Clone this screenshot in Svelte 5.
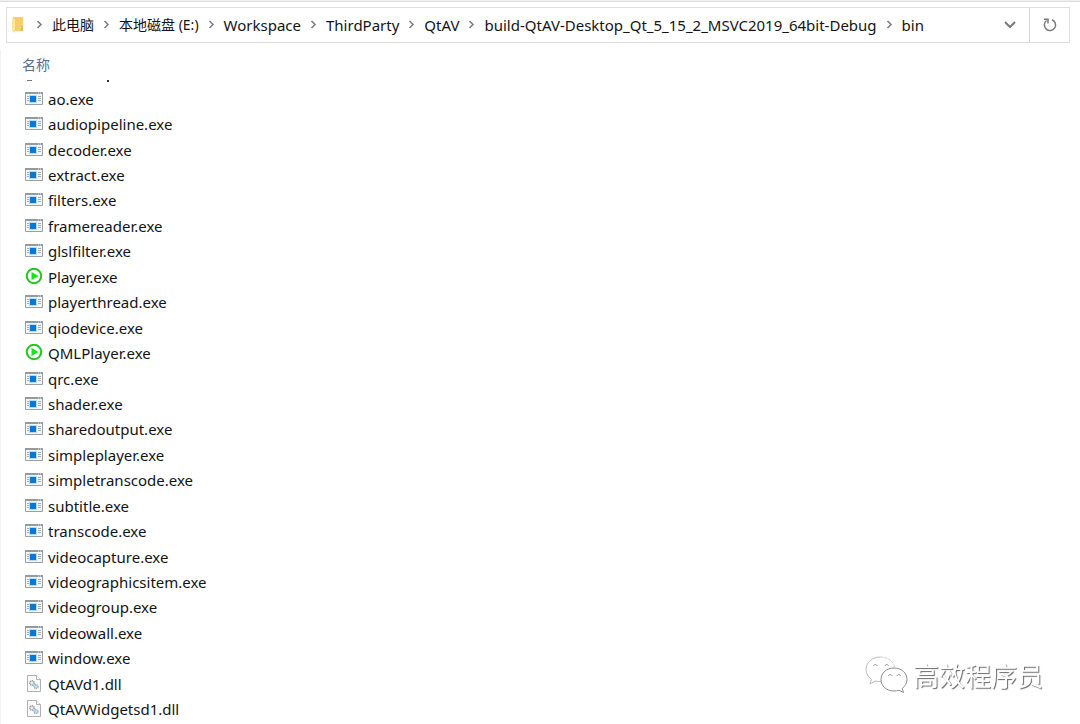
<script lang="ts">
	type Entry = { name: string; kind: 'exe' | 'player' | 'dll' };

	const crumbs = [
		'此电脑',
		'本地磁盘 (E:)',
		'Workspace',
		'ThirdParty',
		'QtAV',
		'build-QtAV-Desktop_Qt_5_15_2_MSVC2019_64bit-Debug',
		'bin'
	];

	const names = [
		'ao.exe',
		'audiopipeline.exe',
		'decoder.exe',
		'extract.exe',
		'filters.exe',
		'framereader.exe',
		'glslfilter.exe',
		'Player.exe',
		'playerthread.exe',
		'qiodevice.exe',
		'QMLPlayer.exe',
		'qrc.exe',
		'shader.exe',
		'sharedoutput.exe',
		'simpleplayer.exe',
		'simpletranscode.exe',
		'subtitle.exe',
		'transcode.exe',
		'videocapture.exe',
		'videographicsitem.exe',
		'videogroup.exe',
		'videowall.exe',
		'window.exe',
		'QtAVd1.dll',
		'QtAVWidgetsd1.dll'
	];

	function kindOf(name: string): Entry['kind'] {
		if (name.endsWith('.dll')) return 'dll';
		return name.endsWith('Player.exe') ? 'player' : 'exe';
	}

	const entries: Entry[] = names.map((name) => ({ name, kind: kindOf(name) }));
</script>

<div class="explorer">
	<header class="address">
		<nav class="address__path" aria-label="Path">
			<svg class="address__folder" width="12" height="16" viewBox="0 0 12 16" aria-hidden="true">
				<path d="M1 0h10v14H1z" fill="#f6cf6b" />
				<path d="M0 1l3 1v14l-3-2z" fill="#ffe59c" />
				<path d="M9 9h2v5H9z" fill="#e9bb57" />
			</svg>
			{#each crumbs as crumb}
				<svg class="address__chevron" width="25" height="10" viewBox="0 0 25 10" aria-hidden="true">
					<path d="M10.5 1l3.500 3.500-3.500 3.500" />
				</svg>
				<a href="#path" class:local={/[^\x00-\x7f]/.test(crumb)}>{crumb}</a>
			{/each}
		</nav>
		<button class="address__history" aria-label="Previous locations">
			<svg width="12" height="8" viewBox="0 0 12 8"><path d="M1 1l5 5 5-5" /></svg>
		</button>
		<button class="address__refresh" aria-label="Refresh">
			<svg width="16" height="16" viewBox="0 0 16 16">
				<path d="M10 2.700a5.600 5.600 0 1 1-5.500.8M2 2.200h4V6.500" />
			</svg>
		</button>
	</header>

	<main class="files">
		<button class="files__heading">名称</button>
		<div class="files__cut" aria-hidden="true"><i></i><i></i></div>
		<ul class="files__list">
			{#each entries as entry}
				<li>
					{#if entry.kind === 'exe'}
						<svg width="18" height="18" viewBox="0 0 18 18" aria-hidden="true">
							<path d="M.5 2.500h17v12H.5z" fill="#f4f5f5" stroke="#9aa0a4" />
							<path d="M0 2h18v2H0z" fill="#949b9f" />
							<path d="M13 3h1m1 0h1" stroke="#e8ebec" />
							<path d="M4 5h8v8H4z" fill="#b9dbf5" />
							<path d="M5 6h6v6H5z" fill="#0878d4" />
							<path d="M2 6.500h2M2 8.500h2M2 10.500h2M13 6.500h3M13 8.500h3M13 10.500h3" stroke="#a5abae" />
						</svg>
					{:else if entry.kind === 'player'}
						<svg width="18" height="18" viewBox="0 0 18 18" aria-hidden="true">
							<circle cx="9" cy="8" r="7.200" fill="#fff" stroke="#1fc61f" stroke-width="2" />
							<path d="M6.500 4l7 4-7 4z" fill="#10e810" />
						</svg>
					{:else}
						<svg width="18" height="18" viewBox="0 0 18 18" aria-hidden="true">
							<path d="M2.500.5h9l4 4v12h-13z" fill="#fafafa" stroke="#b0b0b0" />
							<path d="M11.500.5v4h4" fill="#fff" stroke="#b0b0b0" />
							<circle cx="7" cy="8" r="2.200" fill="#e6e9eb" stroke="#8e9599" stroke-width="1.400" stroke-dasharray="1.200 .6" />
							<circle cx="11" cy="11.500" r="2" fill="#c4dff2" stroke="#8fb4cf" stroke-width="1.400" stroke-dasharray="1.200 .6" />
						</svg>
					{/if}
					<span>{entry.name}</span>
				</li>
			{/each}
		</ul>
	</main>

	<div class="watermark">
		<svg width="44" height="38" viewBox="0 0 44 38" aria-hidden="true">
			<g fill="#fff" stroke-linejoin="round">
				<path
					d="M15.500 1C7.500 1 1 6.500 1 13.500c0 4 2 7.300 5.500 9.700L5 28l5.500-3c2 .6 4 .8 6.500.6"
					stroke="#bbb"
				/>
				<path d="M15.500 1C23 1 29 5.500 30 12" stroke="#ccc" stroke-dasharray="3 1" />
				<path
					d="M29 12c-7.500 0-13 5-13 11.500S21.500 35 29 35c2 0 3.500-.3 5-.8l4.500 2.300-1.300-4C40.500 30 42 27 42 23.500 42 17 36.500 12 29 12z"
					stroke="#8c8c8c"
				/>
			</g>
			<path
				d="M8.500 10c.5-2 3-2 3.500 0M20 10c.5-2 3-2 3.500 0M23.500 20c.5-2 3-2 3.500 0M32 20c.5-2 3-2 3.500 0"
				fill="none"
				stroke="#888"
			/>
		</svg>
		<span>高效程序员</span>
	</div>
</div>

<style>
	:global(body) {
		margin: 0;
		background: #fff;
	}

	.explorer {
		display: flex;
		min-height: 100vh;
		box-sizing: border-box;
		flex-direction: column;
		border-top: 1px solid #f0f0f0;
		color: #141414;
		font-family: 'Noto Sans', 'Noto Sans CJK SC', sans-serif;
		font-size: 15px;
		line-height: 20px;
	}

	.explorer::before {
		height: 1px;
		background: #dcdcdc;
		content: '';
	}

	.address {
		display: flex;
		height: 34px;
		margin: 5px 10px 0 6px;
		border: 1px solid #dedede;
	}

	.address__path {
		display: flex;
		min-width: 0;
		flex: 1;
		align-items: center;
		padding: 0 0 1px 5px;
		white-space: nowrap;
	}

	.address__folder {
		margin-right: 3px;
	}

	.address a {
		color: inherit;
		text-decoration: none;
	}

	.address a.local {
		font-size: 14px;
	}

	.address button {
		display: flex;
		align-items: center;
		justify-content: center;
		border: 0;
		background: none;
		padding: 0;
	}

	.address .address__history {
		width: 38px;
	}

	.address .address__refresh {
		width: 40px;
		border-left: 1px solid #d4d4d4;
	}

	.address svg {
		flex: none;
	}

	.address__chevron path,
	.address button path {
		fill: none;
		stroke: #7a7a7a;
		stroke-width: 1.5;
	}

	.address .address__history path {
		stroke-width: 2;
	}

	.files {
		display: flex;
		flex: 1;
		flex-direction: column;
		margin-top: 7px;
		border-left: 1px solid #f3f3f3;
		padding: 5px 0 2px 21px;
	}

	.files__heading {
		align-self: flex-start;
		border: 0;
		background: none;
		padding: 0;
		color: #5a6d8c;
		font: inherit;
		font-size: 14px;
		line-height: 20px;
	}

	/* Bottom edge of the row that is scrolled under the heading. */
	.files__cut {
		display: flex;
		height: 2px;
		gap: 75px;
		padding: 5px 0 4px 5px;
	}

	.files__cut i {
		width: 5px;
		height: 1px;
		background: #777;
	}

	.files__cut i:last-child {
		width: 2px;
		height: 2px;
		background: #333;
	}

	.files__list {
		display: flex;
		flex: 1;
		flex-direction: column;
		margin: 0;
		padding: 0 0 0 3px;
		list-style: none;
	}

	.files__list li {
		display: flex;
		flex: 1;
		align-items: center;
		gap: 5px;
	}

	.files__list svg {
		flex: none;
	}

	.watermark {
		position: fixed;
		right: 37px;
		bottom: 30px;
		display: flex;
		align-items: center;
		gap: 4px;
		color: #fff;
		font-family: 'Noto Sans CJK SC', sans-serif;
		font-size: 26px;
		line-height: 38px;
		text-shadow: 1px 1px 1px #666;
	}
</style>
